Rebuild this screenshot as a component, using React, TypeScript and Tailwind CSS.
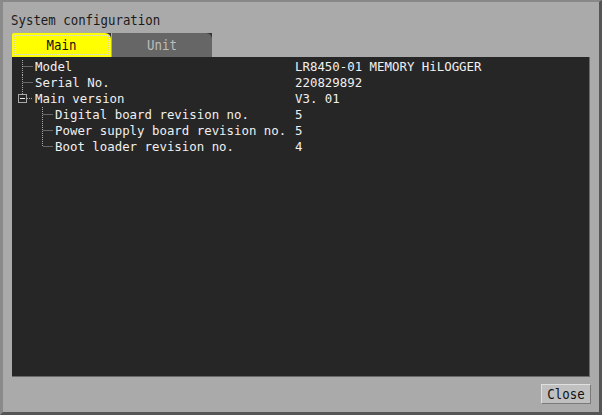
import React from 'react';

type Row = {
  label: string;
  value: string;
  level: 0 | 1;
  kind: 'first' | 'mid' | 'box' | 'last';
};

const rows: Row[] = [
  { label: 'Model', value: 'LR8450-01 MEMORY HiLOGGER', level: 0, kind: 'first' },
  { label: 'Serial No.', value: '220829892', level: 0, kind: 'mid' },
  { label: 'Main version', value: 'V3. 01', level: 0, kind: 'box' },
  { label: 'Digital board revision no.', value: '5', level: 1, kind: 'mid' },
  { label: 'Power supply board revision no.', value: '5', level: 1, kind: 'mid' },
  { label: 'Boot loader revision no.', value: '4', level: 1, kind: 'last' },
];

const dot = { stroke: '#a8a8a8', strokeWidth: 1, strokeDasharray: '1 1' };

// tree connector drawn per row
function Connector({ level, kind }: { level: 0 | 1; kind: Row['kind'] }) {
  const w = level === 0 ? 23 : 43;
  const x = level === 0 ? 10.5 : 30.5;
  return (
    <svg width={w} height={16} className="shrink-0" viewBox={`0 0 ${w} 16`}>
      {level === 1 && kind !== 'last' && <line x1={x} y1={0} x2={x} y2={16} {...dot} />}
      {level === 1 && kind === 'last' && <line x1={x} y1={0} x2={x} y2={8} {...dot} />}
      {level === 0 && kind === 'first' && <line x1={x} y1={1} x2={x} y2={16} {...dot} />}
      {level === 0 && kind === 'mid' && <line x1={x} y1={0} x2={x} y2={16} {...dot} />}
      {kind === 'box' ? (
        <>
          <line x1={x} y1={0} x2={x} y2={3} {...dot} />
          <rect x={6.5} y={3.5} width={8} height={8} fill="none" stroke="#a8a8a8" />
          <line x1={8} y1={7.5} x2={13} y2={7.5} stroke="#e8e8e8" />
          <line x1={15} y1={7.5} x2={21} y2={7.5} {...dot} />
        </>
      ) : (
        <line x1={x + 1} y1={7.5} x2={x + 11} y2={7.5} {...dot} />
      )}
    </svg>
  );
}

export default function App() {
  return (
    <div
      className="w-[602px] h-[415px] bg-[#aaaaaa] border-t-2 border-l-[3px] border-r-[3px] border-b-[3px] border-t-[#888888] border-l-[#8a8a8a] border-r-[#555555] border-b-[#555555] px-[9px] pt-[8px] flex flex-col text-[12.4px] leading-[16px]"
      style={{ fontFamily: '"DejaVu Sans Mono", "Liberation Mono", monospace' }}
    >
      <div className="text-[#1a1a1a] -ml-[1px] h-[16px] pt-[2px]">
        <span className="inline-block scale-y-[1.2]">System configuration</span>
      </div>

      {/* tabs */}
      <div className="flex gap-[1px] mt-[7px]">
        <div className="w-[99px] h-[24px] bg-[linear-gradient(225deg,#333_5px,transparent_5px)]">
          <div className="h-full bg-[#ffff00] rounded-tr-[6px] rounded-tl-[2px] p-[2px]">
            <div className="h-full border border-dotted border-[#d8d8b0] flex items-center justify-center text-[#111]">
              <span className="inline-block scale-y-[1.2]">Main</span>
            </div>
          </div>
        </div>
        <div className="w-[100px] h-[24px] bg-[linear-gradient(225deg,#333_5px,transparent_5px)]">
          <div className="h-full bg-[#666666] rounded-tr-[6px] flex items-center justify-center text-[#bdbdbd]">
            <span className="inline-block scale-y-[1.2]">Unit</span>
          </div>
        </div>
      </div>

      {/* panel */}
      <div className="h-[320px] bg-[#262626] border-r border-b border-[#6a6a6a] pt-[2px] text-[#f0f0f0]">
        {rows.map((r) => (
          <div key={r.label} className="grid grid-cols-[283px_1fr] h-[16px] whitespace-pre">
            <div className="flex items-center">
              <Connector level={r.level} kind={r.kind} />
              <span className="inline-block scale-y-[1.06]">{r.label}</span>
            </div>
            <span className="inline-block scale-y-[1.06] origin-left">{r.value}</span>
          </div>
        ))}
      </div>

      <div className="flex justify-end mt-[7px] -mr-[1px]">
        <button className="w-[50px] h-[20px] bg-[#c0c0c0] border border-t-[#e0e0e0] border-l-[#e0e0e0] border-r-[#7a7a7a] border-b-[#7a7a7a] text-[#111] leading-[18px]">
          <span className="inline-block scale-y-[1.15]">Close</span>
        </button>
      </div>
    </div>
  );
}
